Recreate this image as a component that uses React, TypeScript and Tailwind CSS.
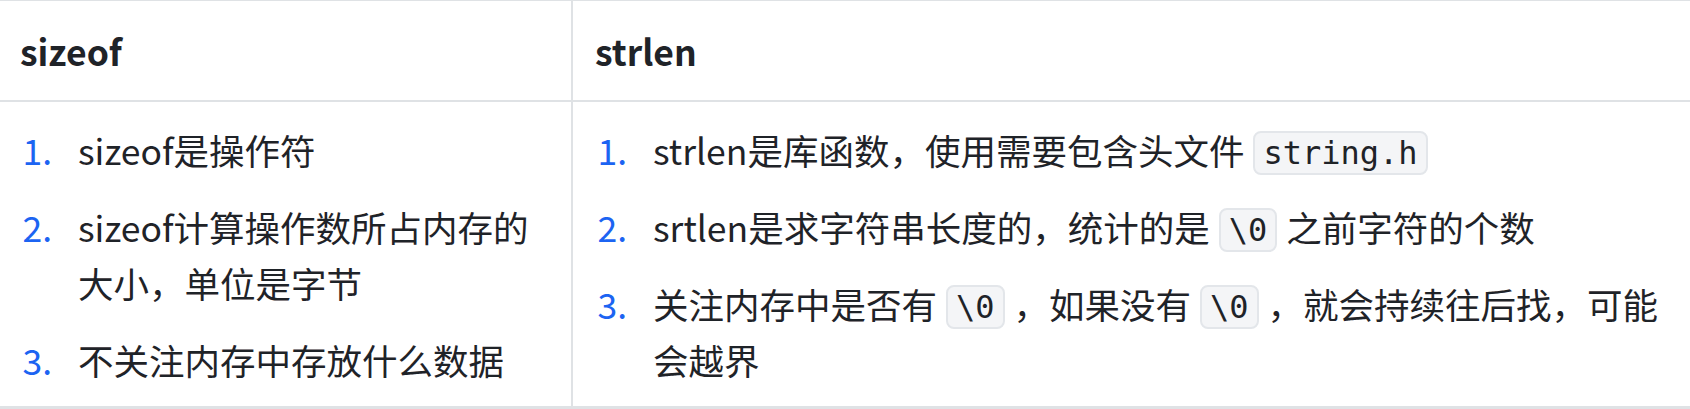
import type { ReactNode } from "react"

const border = "border-[#dfe2e5]"

function Code({ children }: { children: ReactNode }) {
  return (
    <code className="inline-block mx-[9px] px-[8px] h-[44px] leading-[40px] align-middle rounded-[8px] border-2 border-[#e3e6ea] bg-[#f4f5f7] font-['DejaVu_Sans_Mono',monospace] text-[32px] text-[#1f2328] relative -top-[2px]">
      {children}
    </code>
  )
}

function Item({ n, children }: { n: number; children: ReactNode }) {
  return (
    <li className="flex">
      <span className="w-[58px] shrink-0 pr-[26px] text-right text-[#1c64f2]">{n}.</span>
      <div className="whitespace-nowrap">{children}</div>
    </li>
  )
}

const left = [
  <>sizeof是操作符</>,
  <>sizeof计算操作数所占内存的<br />大小，单位是字节</>,
  <>不关注内存中存放什么数据</>,
]

const right = [
  <>strlen是库函数，使用需要包含头文件<Code>string.h</Code></>,
  <>srtlen是求字符串长度的，统计的是<Code>\0</Code>之前字符的个数</>,
  <>关注内存中是否有<Code>\0</Code>，如果没有<Code>\0</Code>，就会持续往后找，可能<br />会越界</>,
]

export default function App() {
  return (
    <div className="w-[1690px] h-[409px] bg-white overflow-hidden font-['Noto_Sans_CJK_SC',sans-serif] text-[#1f2328] text-[35.5px]">
      <div className={`grid grid-cols-[573px_1fr] border-t border-b-[3px] ${border}`}>
        <div className={`h-[101px] flex items-center pl-[20px] font-bold border-b-2 border-r-2 ${border}`}>sizeof</div>
        <div className={`h-[101px] flex items-center pl-[22px] font-bold border-b-2 ${border}`}>strlen</div>

        <div className={`h-[304px] pt-[20px] pl-[20px] border-r-2 ${border}`}>
          <ol className="flex flex-col gap-[21px] leading-[56px]">
            {left.map((c, i) => (
              <Item key={i} n={i + 1}>{c}</Item>
            ))}
          </ol>
        </div>
        <div className="h-[304px] pt-[20px] pl-[22px]">
          <ol className="flex flex-col gap-[21px] leading-[56px]">
            {right.map((c, i) => (
              <Item key={i} n={i + 1}>{c}</Item>
            ))}
          </ol>
        </div>
      </div>
    </div>
  )
}
